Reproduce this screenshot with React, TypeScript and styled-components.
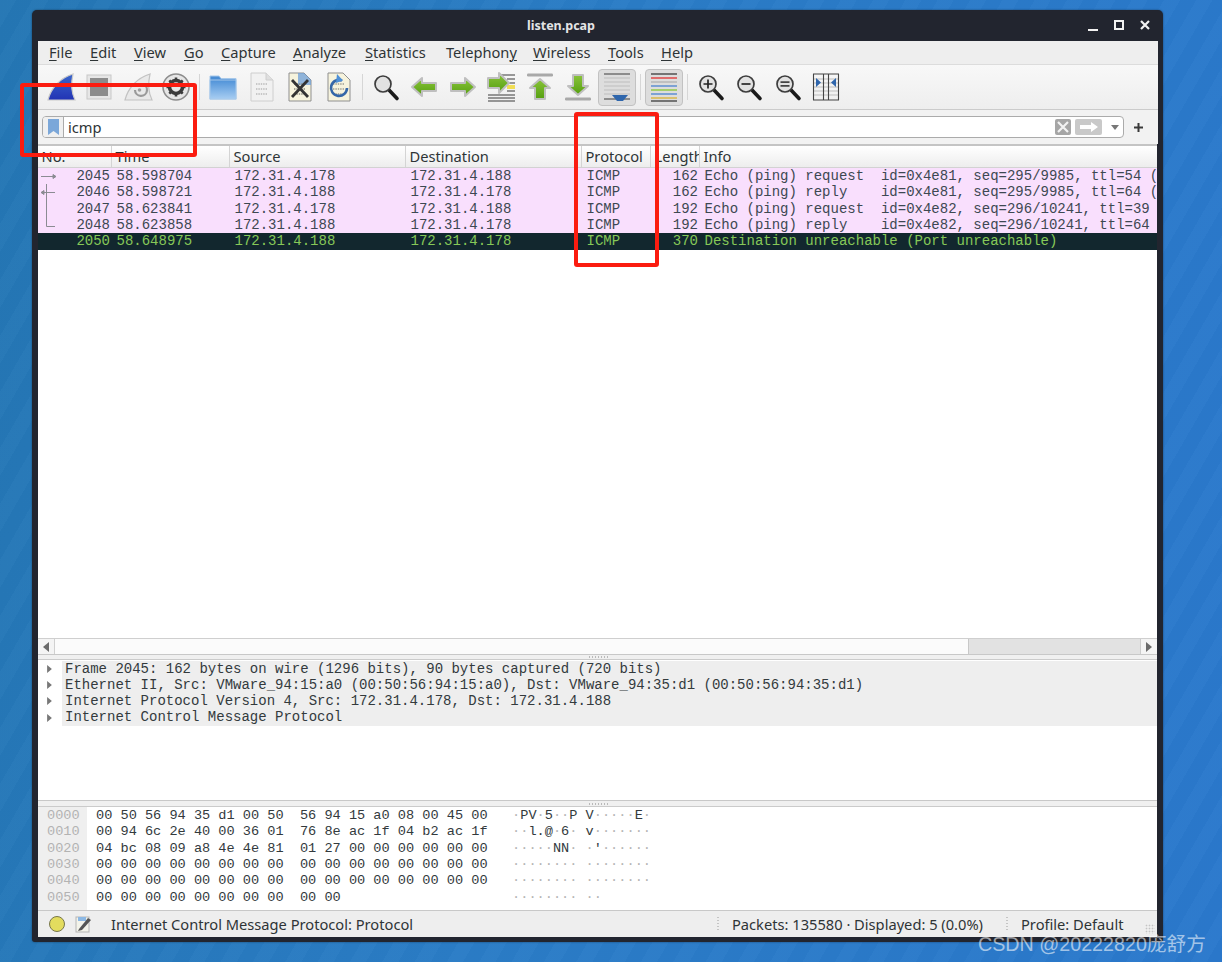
import React from "react";
import styled, { createGlobalStyle } from "styled-components";

const Global = createGlobalStyle`
  html, body { margin: 0; padding: 0; }
  body {
    width: 1222px; height: 962px; overflow: hidden;
    font-family: "Noto Sans", "Open Sans", sans-serif;
    background:
      repeating-linear-gradient(120deg, rgba(255,255,255,0.018) 0 14px, rgba(0,0,0,0.012) 14px 28px),
      linear-gradient(100deg, #2476b4 0%, #2a7cc6 45%, #2a78cc 100%);
  }
`;
const Desktop = styled.div`
  position: relative;
  width: 1222px;
  height: 962px;
  padding: 10px 0 0 32px;
  box-sizing: border-box;
`;
const Win = styled.div`
  width: 1131px;
  height: 932px;
  box-sizing: border-box;
  background: #22252f;
  border-radius: 5px 5px 3px 3px;
  padding: 0 5px 5px 6px;
  display: flex;
  flex-direction: column;
  box-shadow: 0 0 2px rgba(0,0,0,.5);
`;
const TitleBar = styled.div`
  height: 31px;
  flex: none;
  position: relative;
  display: flex;
  align-items: center;
  justify-content: center;
  padding-right: 74px;
  color: #e4e4e6;
  font: 700 12.5px "Noto Sans", sans-serif;
`;
const WinControls = styled.div`
  position: absolute;
  right: 6px;
  top: 8px;
  display: flex;
  gap: 12px;
  align-items: center;
`;
const Menu = styled.nav`
  height: 23px;
  flex: none;
  box-sizing: content-box;
  background: #eeeeee;
  border-bottom: 1px solid #dcdcdc;
  display: flex;
  align-items: center;
  padding-left: 11px;
  color: #2e3436;
  font-size: 14.67px;
  line-height: 21px;
`;
const MenuItem = styled.span<{ $w: number }>`
  width: ${(p) => p.$w}px;
  flex: none;
  margin-bottom: 1px;
  u { text-underline-offset: 2px; text-decoration-thickness: 1px; }
`;
const Toolbar = styled.div`
  height: 45px;
  flex: none;
  box-sizing: border-box;
  background: linear-gradient(#f8f8f8, #eeeeee);
  border-bottom: 1px solid #cbcbcb;
  display: flex;
  align-items: center;
  padding-left: 3.5px;
`;
const ToolBtn = styled.div<{ $on?: boolean }>`
  width: 38.5px;
  height: 37px;
  flex: none;
  box-sizing: border-box;
  display: flex;
  align-items: center;
  justify-content: center;
  border-radius: 4px;
  background: ${(p) => (p.$on ? "#dddddd" : "transparent")};
  border: 1px solid ${(p) => (p.$on ? "#c2c2c2" : "transparent")};
`;
const ToolSep = styled.div`
  width: 1px;
  height: 26px;
  flex: none;
  background: #d6d6d6;
  margin: 0 3.75px;
`;
const FilterBar = styled.div`
  height: 34px;
  flex: none;
  background: #f2f2f2;
  display: flex;
  align-items: center;
  padding-left: 4px;
  box-sizing: border-box;
`;
const FilterBox = styled.div`
  width: 1082px;
  height: 22px;
  box-sizing: border-box;
  border: 1px solid #ababab;
  border-radius: 4px;
  background: #fff;
  display: flex;
  align-items: center;
  flex: none;
`;
const Bookmark = styled.div`
  width: 21px;
  height: 100%;
  box-sizing: border-box;
  flex: none;
  background: #f0f0f0;
  border-right: 1px solid #ababab;
  border-radius: 3px 0 0 3px;
  display: flex;
  align-items: center;
  justify-content: center;
`;
const FilterText = styled.span`
  flex: 1;
  padding-left: 4px;
  font-size: 14.67px;
  color: #2e3436;
`;
const FilterEnd = styled.div`
  display: flex;
  align-items: center;
  margin-right: 4px;
  gap: 4px;
`;
const Plus = styled.div`
  margin-left: 9px;
  display: flex;
`;
const Panel = styled.div`
  flex: 1;
  min-height: 0;
  background: #fff;
  display: flex;
  flex-direction: column;
  margin-right: 1px;
  border-top: 2px solid #c4c4c4;
  overflow: hidden;
`;
const cols = "74px 118px 176px 176px 69px 49px 1fr";
const HeaderRow = styled.div`
  display: grid;
  grid-template-columns: ${cols};
  height: 22px;
  flex: none;
  box-sizing: border-box;
  background: linear-gradient(#ffffff, #ededed);
  border-bottom: 1px solid #d2d2d2;
`;
const HeadCell = styled.div`
  font-size: 14.67px;
  color: #2e3436;
  padding: 1px 0 0 3.5px;
  line-height: 19px;
  border-right: 1px solid #d4d4d4;
  overflow: hidden;
  white-space: nowrap;
  &:last-child { border-right: 0; }
`;
const PacketArea = styled.div`
  flex: 1;
  min-height: 0;
  background: #fff;
`;
const PacketRow = styled.div<{ $sel?: boolean }>`
  display: grid;
  grid-template-columns: ${cols};
  height: 16.33px;
  background: ${(p) => (p.$sel ? "#12272e" : "#f9dffd")};
  color: ${(p) => (p.$sel ? "#86c858" : "#3d4852")};
  font: 14px/16px "Liberation Mono", monospace;
  white-space: pre;
  overflow: hidden;
`;
const NoCell = styled.div`
  display: flex;
  justify-content: space-between;
  align-items: stretch;
  padding-right: 2px;
`;
const Cell = styled.div<{ $right?: boolean }>`
  padding: 0 2px 0 4.5px;
  overflow: hidden;
  text-align: ${(p) => (p.$right ? "right" : "left")};
`;
const HScroll = styled.div`
  height: 17px;
  flex: none;
  box-sizing: border-box;
  border-top: 1px solid #cfcfcf;
  border-bottom: 1px solid #c8c8c8;
  display: flex;
  background: #f2f2f2;
`;
const ScrollBtn = styled.div`
  width: 16px;
  flex: none;
  display: flex;
  align-items: center;
  justify-content: center;
  background: #f4f4f4;
`;
const ScrollThumb = styled.div`
  width: 913px;
  flex: none;
  background: #fbfbfb;
  border-left: 1px solid #d0d0d0;
  border-right: 1px solid #c8c8c8;
`;
const ScrollTrack = styled.div`
  flex: 1;
  background: #e2e2e2;
  border-right: 1px solid #cccccc;
`;
const Splitter = styled.div<{ $h: number }>`
  height: ${(p) => p.$h}px;
  flex: none;
  box-sizing: border-box;
  background: #f0f0f0;
  border-bottom: 1px solid #cbcbcb;
  display: flex;
  justify-content: center;
  align-items: center;
`;
const Grip = styled.div`
  width: 20px;
  height: 2px;
  background-image: radial-gradient(circle, #b9b9b9 40%, transparent 50%);
  background-size: 3px 2px;
`;
const Details = styled.div`
  height: 141px;
  flex: none;
  box-sizing: border-box;
  border-bottom: 1px solid #c8c8c8;
  background: #fff;
  font: 14px/16.33px "Liberation Mono", monospace;
  color: #333a3d;
  padding-top: 0.5px;
`;
const DetailRow = styled.div`
  display: flex;
  height: 16.33px;
  white-space: pre;
`;
const Expander = styled.div`
  width: 24px;
  flex: none;
  display: flex;
  align-items: center;
  justify-content: center;
  padding-right: 2px;
  box-sizing: border-box;
`;
const DetailText = styled.div`
  flex: 1;
  background: #eeeeee;
  padding-left: 3px;
`;
const Hex = styled.div`
  flex: none;
  height: 104px;
  display: flex;
  background: #fff;
  border-bottom: 1px solid #c8c8c8;
  box-sizing: border-box;
  font: 13.6px/16.33px "Liberation Mono", monospace;
  color: #333a3d;
  white-space: pre;
`;
const Gutter = styled.div`
  width: 49px;
  flex: none;
  background: #efefef;
  color: #b3b3b3;
  padding: 1px 0 0 9px;
  box-sizing: border-box;
`;
const HexBody = styled.div`
  padding: 1px 0 0 9px;
`;
const Dot = styled.span`
  color: #b5b5b5;
`;
const Status = styled.div`
  height: 26px;
  flex: none;
  position: relative;
  background: #eeeeee;
  display: flex;
  align-items: center;
  font-size: 14.67px;
  color: #2e3436;
  white-space: nowrap;
`;
const StatusLed = styled.div`
  width: 16px;
  height: 16px;
  border-radius: 50%;
  box-sizing: border-box;
  background: #e3dc5e;
  border: 1px solid #77764a;
  margin: 0 10px 0 11px;
  flex: none;
`;
const StatusMsg = styled.span`
  margin-left: 18px;
  width: 606px;
  flex: none;
`;
const StatusSep = styled.div<{ $gap: number }>`
  width: 2px;
  height: 16px;
  flex: none;
  margin-right: ${(p) => p.$gap}px;
  background-image: radial-gradient(circle, #c4c4c4 45%, transparent 55%);
  background-size: 2px 3px;
`;
const StatusCount = styled.span`
  width: 274px;
  flex: none;
`;
const ResizeGrip = styled.div`
  position: absolute;
  right: 2px;
  bottom: 3px;
  width: 10px;
  height: 10px;
  background-image: radial-gradient(circle, #c4c4c4 40%, transparent 50%);
  background-size: 3px 3px;
`;
const Highlight = styled.div<{ $l: number; $t: number; $w: number; $h: number }>`
  position: absolute;
  left: ${(p) => p.$l}px;
  top: ${(p) => p.$t}px;
  width: ${(p) => p.$w}px;
  height: ${(p) => p.$h}px;
  box-sizing: border-box;
  border: 4px solid #fb1c10;
  border-radius: 3px;
`;
const Watermark = styled.div`
  position: absolute;
  left: 978px;
  top: 931px;
  font: 19.7px/26px "Liberation Sans", "Noto Sans CJK SC", sans-serif;
  color: rgba(255, 255, 255, 0.58);
  white-space: nowrap;
`;

const Defs = () => (
  <svg width="0" height="0" style={{ position: "absolute" }}>
    <defs>
      <linearGradient id="g" x1="0" y1="0" x2="0" y2="1">
        <stop offset="0" stopColor="#8ac43a" />
        <stop offset="1" stopColor="#559f10" />
      </linearGradient>
      <linearGradient id="fin" x1="0" y1="0" x2="0" y2="1">
        <stop offset="0" stopColor="#3a66cc" />
        <stop offset="1" stopColor="#2233b4" />
      </linearGradient>
      <linearGradient id="folder" x1="0" y1="0" x2="0" y2="1">
        <stop offset="0" stopColor="#4f92d8" />
        <stop offset="1" stopColor="#a7cdf2" />
      </linearGradient>
    </defs>
  </svg>
);

const S: React.FC<{ children: React.ReactNode }> = ({ children }) => (
  <svg width="32" height="32" viewBox="0 0 32 32">{children}</svg>
);
const Arrow = ({ d }: { d: string }) => (
  <path d={d} fill="url(#g)" stroke="#bfbfbf" strokeWidth="2" strokeLinejoin="round" />
);
const FinIcon = () => (
  <S>
    <path d="M3 29C6 17 15 7 28 3C26 12 26 21 30 29Z" fill="url(#fin)" stroke="#c9c9c9" strokeWidth="1.2" />
  </S>
);
const StopIcon = () => (
  <S>
    <rect x="4" y="4" width="24" height="24" fill="#e6e6e6" stroke="#c8c8c8" />
    <rect x="7" y="7" width="18" height="18" fill="#8c8c8c" />
  </S>
);
const RestartIcon = () => (
  <S>
    <path d="M3 29C6 17 15 7 28 3C26 12 26 21 30 29Z" fill="#e9e9e9" stroke="#c2c2c2" strokeWidth="1.2" />
    <path d="M20 13A6 6 0 1 1 13 19" fill="none" stroke="#9a9a9a" strokeWidth="2.2" />
    <circle cx="17.5" cy="19" r="1.8" fill="#a0a0a0" />
  </S>
);
const GearIcon = () => (
  <S>
    <circle cx="16" cy="16" r="13" fill="#e6e6e6" stroke="#8d8d8d" strokeWidth="1.6" />
    <circle cx="16" cy="16" r="6.5" fill="none" stroke="#3b3b3b" strokeWidth="3.6" />
    <g stroke="#3b3b3b" strokeWidth="2.6">
      <path d="M16 6.5V10M16 22V25.5M6.5 16H10M22 16H25.5M9.3 9.3L11.8 11.8M20.2 20.2L22.7 22.7M9.3 22.7L11.8 20.2M20.2 11.8L22.7 9.3" />
    </g>
  </S>
);
const FolderIcon = () => (
  <S>
    <path d="M3 5H12L14 7.5H29V28H3Z" fill="#4a8dd4" stroke="#a6c8ea" />
    <rect x="3" y="9" width="26" height="19" fill="url(#folder)" stroke="#a6c8ea" />
  </S>
);
const Digits = ({ c = "#b9b9b9" }: { c?: string }) => (
  <g stroke={c} strokeWidth="1.6" strokeDasharray="1.4 1">
    <path d="M10 13H22M10 18H22M10 23H22" />
  </g>
);
const FileIcon = () => (
  <S>
    <path d="M5 2H20L27 9V30H5Z" fill="#f1f1f1" stroke="#cecece" />
    <path d="M20 2V9H27" fill="#dfdfdf" stroke="#cecece" />
    <Digits />
  </S>
);
const CloseFileIcon = () => (
  <S>
    <path d="M5 2H20L27 9V30H5Z" fill="#f6f3dd" stroke="#8f8f8f" />
    <path d="M14 2H20L27 9V14H14Z" fill="#6d9fd8" opacity=".75" />
    <Digits c="#8e8e82" />
    <path d="M8 9L24 26M24 9L8 26" stroke="#333" strokeWidth="2.8" />
  </S>
);
const ReloadFileIcon = () => (
  <S>
    <path d="M5 2H20L27 9V30H5Z" fill="#f6f3dd" stroke="#8f8f8f" />
    <Digits c="#9c9c90" />
    <path d="M19 9.5A8 8 0 1 0 24 17" fill="none" stroke="#3467a8" strokeWidth="2.6" />
    <path d="M14 3L20 9.5L13 12Z" fill="#4d8fd6" />
  </S>
);
const Magnifier = ({ children }: { children?: React.ReactNode }) => (
  <S>
    <path d="M19 19L27 27.5" stroke="#1b1b1b" strokeWidth="3.6" strokeLinecap="round" />
    <circle cx="13" cy="13" r="8" fill="#e2e2e2" stroke="#3d3d3d" strokeWidth="1.7" />
    {children}
  </S>
);
const BackIcon = () => (
  <S><Arrow d="M4 16L14 7V12H28V20H14V25Z" /></S>
);
const ForwardIcon = () => (
  <S><Arrow d="M28 16L18 7V12H4V20H18V25Z" /></S>
);
const JumpIcon = () => (
  <S>
    <g stroke="#3a3a3a" strokeWidth="1.2">
      <path d="M14 4H30M22 8H30M22 12H30M22 16H30M22 20H30M3 24H30M3 27H30M3 30H30" />
    </g>
    <path d="M22 14H30V18H22Z" fill="#f1de54" />
    <Arrow d="M24 12L14 2V7H3V17H14V22Z" />
  </S>
);
const TopIcon = () => (
  <S>
    <rect x="3" y="2.5" width="26" height="3" rx="1.2" fill="#a9a9a9" />
    <Arrow d="M16 8L26 17H21V28H11V17H6Z" />
  </S>
);
const BottomIcon = () => (
  <S>
    <rect x="3" y="26.5" width="26" height="3" rx="1.2" fill="#a9a9a9" />
    <Arrow d="M16 24L26 15H21V4H11V15H6Z" />
  </S>
);
const AutoIcon = () => (
  <S>
    <g stroke="#3c3c3c" strokeWidth="1.1">
      <path d="M3 3H29M3 28H29" />
    </g>
    <g stroke="#bdbdbd">
      <path d="M3 7H29M3 11H29M3 15H29M3 19H29M3 23H29" />
    </g>
    <path d="M11 24H27L22 30H16Z" fill="#2f66ac" />
  </S>
);
const ColorIcon = () => (
  <S>
    <g strokeWidth="1.3">
      <path d="M3 3H29" stroke="#3c3c3c" />
      <path d="M3 7H29" stroke="#e03030" />
      <path d="M3 11H29" stroke="#b0b0b0" />
      <path d="M3 15H29" stroke="#4a82d0" />
      <path d="M3 19H29" stroke="#86c832" />
      <path d="M3 23H29" stroke="#4a82d0" />
      <path d="M3 27H29" stroke="#d8b030" />
      <path d="M3 30H29" stroke="#3c3c3c" />
    </g>
  </S>
);
const ResizeIcon = () => (
  <S>
    <g stroke="#bdbdbd">
      <path d="M3 8H29M3 12H29M3 16H29M3 20H29M3 24H29" />
    </g>
    <g stroke="#444" strokeWidth="1.1">
      <path d="M3 3H29M3 29H29M3.5 3V29M13.5 3V29M18.5 3V29M28.5 3V29" />
    </g>
    <path d="M6 7L11 11.5L6 16Z M26 7L21 11.5L26 16Z" fill="#2f66ac" />
  </S>
);

const FilterClear = () => (
  <svg width="16" height="16" viewBox="0 0 16 16">
    <rect width="16" height="16" rx="2" fill="#a6a6a6" />
    <path d="M3 3L13 13M13 3L3 13" stroke="#f2f2f2" strokeWidth="2.2" />
  </svg>
);
const FilterApply = () => (
  <svg width="27" height="16" viewBox="0 0 27 16">
    <rect width="27" height="16" rx="2" fill="#c9c9c9" />
    <path d="M5 6H16V3L23 8L16 13V10H5Z" fill="#fff" />
  </svg>
);
const Caret = () => (
  <svg width="8" height="5" viewBox="0 0 8 5" style={{ marginLeft: 5 }}>
    <path d="M0 0H8L4 5Z" fill="#777" />
  </svg>
);

const Tri = ({ left, small }: { left?: boolean; small?: boolean }) => (
  <svg width={small ? 5 : 6} height={small ? 8 : 10} viewBox="0 0 6 10">
    <path d={left ? "M6 0V10L0 5Z" : "M0 0V10L6 5Z"} fill={small ? "#777" : "#6a6a6a"} />
  </svg>
);

const Rel = ({ kind }: { kind: "a" | "b" | "c" | "d" }) => (
  <svg width="22" height="17" viewBox="0 0 22 17">
    <g fill="none" stroke="#8b8b93" strokeWidth="1">
      {kind === "a" && <><path d="M3 8.5H17" /><path d="M15 6.5L18 8.5L15 10.5Z" fill="#8b8b93" /></>}
      {kind === "b" && <><path d="M8.5 0V17M3 8.5H17" /><path d="M6 6.5L3 8.5L6 10.5Z" fill="#8b8b93" /></>}
      {kind === "c" && <path d="M8.5 0V17" />}
      {kind === "d" && <path d="M8.5 0V9.5H17" />}
    </g>
  </svg>
);

const menus: [string, string, string, number][] = [
  ["", "F", "ile", 41],
  ["", "E", "dit", 44],
  ["", "V", "iew", 50],
  ["", "G", "o", 37],
  ["", "C", "apture", 72],
  ["", "A", "nalyze", 72],
  ["", "S", "tatistics", 81],
  ["Telephon", "y", "", 87],
  ["", "W", "ireless", 75],
  ["", "T", "ools", 53],
  ["", "H", "elp", 50],
];

const packets = [
  { rel: "a", no: "2045", t: "58.598704", s: "172.31.4.178", d: "172.31.4.188", len: "162", info: "Echo (ping) request  id=0x4e81, seq=295/9985, ttl=54 (reply in 2046)" },
  { rel: "b", no: "2046", t: "58.598721", s: "172.31.4.188", d: "172.31.4.178", len: "162", info: "Echo (ping) reply    id=0x4e81, seq=295/9985, ttl=64 (request in 2045)" },
  { rel: "c", no: "2047", t: "58.623841", s: "172.31.4.178", d: "172.31.4.188", len: "192", info: "Echo (ping) request  id=0x4e82, seq=296/10241, ttl=39 (reply in 2048)" },
  { rel: "d", no: "2048", t: "58.623858", s: "172.31.4.188", d: "172.31.4.178", len: "192", info: "Echo (ping) reply    id=0x4e82, seq=296/10241, ttl=64 (request in 2047)" },
  { rel: "", no: "2050", t: "58.648975", s: "172.31.4.188", d: "172.31.4.178", len: "370", info: "Destination unreachable (Port unreachable)", sel: true },
];

const details = [
  "Frame 2045: 162 bytes on wire (1296 bits), 90 bytes captured (720 bits)",
  "Ethernet II, Src: VMware_94:15:a0 (00:50:56:94:15:a0), Dst: VMware_94:35:d1 (00:50:56:94:35:d1)",
  "Internet Protocol Version 4, Src: 172.31.4.178, Dst: 172.31.4.188",
  "Internet Control Message Protocol",
];

const hex: [string, string, string][] = [
  ["0000", "00 50 56 94 35 d1 00 50  56 94 15 a0 08 00 45 00", "·PV·5··P V·····E·"],
  ["0010", "00 94 6c 2e 40 00 36 01  76 8e ac 1f 04 b2 ac 1f", "··l.@·6· v·······"],
  ["0020", "04 bc 08 09 a8 4e 4e 81  01 27 00 00 00 00 00 00", "·····NN· ·'······"],
  ["0030", "00 00 00 00 00 00 00 00  00 00 00 00 00 00 00 00", "········ ········"],
  ["0040", "00 00 00 00 00 00 00 00  00 00 00 00 00 00 00 00", "········ ········"],
  ["0050", "00 00 00 00 00 00 00 00  00 00", "········ ··"],
];

const pad = (s: string) => s.padEnd(51, " ");

export default function App() {
  return (
    <Desktop>
      <Global />
      <Defs />
      <Win>
        <TitleBar>
          listen.pcap
          <WinControls>
            <svg width="14" height="14" viewBox="0 0 14 14"><rect x="2" y="11" width="10" height="2" fill="#f2f2f2" /></svg>
            <svg width="14" height="14" viewBox="0 0 14 14"><rect x="3" y="3" width="8" height="8" fill="none" stroke="#f2f2f2" strokeWidth="2" /></svg>
            <svg width="14" height="14" viewBox="0 0 14 14"><path d="M3 3L11 11M11 3L3 11" stroke="#f2f2f2" strokeWidth="2.2" /></svg>
          </WinControls>
        </TitleBar>
        <Menu>
          {menus.map(([pre, u, post, w]) => (
            <MenuItem key={u + post} $w={w}>
              {pre}<u>{u}</u>{post}
            </MenuItem>
          ))}
        </Menu>
        <Toolbar>
          <ToolBtn><FinIcon /></ToolBtn>
          <ToolBtn><StopIcon /></ToolBtn>
          <ToolBtn><RestartIcon /></ToolBtn>
          <ToolBtn><GearIcon /></ToolBtn>
          <ToolSep />
          <ToolBtn><FolderIcon /></ToolBtn>
          <ToolBtn><FileIcon /></ToolBtn>
          <ToolBtn><CloseFileIcon /></ToolBtn>
          <ToolBtn><ReloadFileIcon /></ToolBtn>
          <ToolSep />
          <ToolBtn><Magnifier /></ToolBtn>
          <ToolBtn><BackIcon /></ToolBtn>
          <ToolBtn><ForwardIcon /></ToolBtn>
          <ToolBtn><JumpIcon /></ToolBtn>
          <ToolBtn><TopIcon /></ToolBtn>
          <ToolBtn><BottomIcon /></ToolBtn>
          <ToolBtn $on><AutoIcon /></ToolBtn>
          <ToolSep />
          <ToolBtn $on><ColorIcon /></ToolBtn>
          <ToolSep />
          <ToolBtn>
            <Magnifier><path d="M8.5 13H17.5M13 8.5V17.5" stroke="#222" strokeWidth="1.7" /></Magnifier>
          </ToolBtn>
          <ToolBtn>
            <Magnifier><path d="M8.5 13H17.5" stroke="#444" strokeWidth="2" /></Magnifier>
          </ToolBtn>
          <ToolBtn>
            <Magnifier><path d="M8.5 11.2H17.5M8.5 14.8H17.5" stroke="#444" strokeWidth="1.7" /></Magnifier>
          </ToolBtn>
          <ToolBtn><ResizeIcon /></ToolBtn>
        </Toolbar>
        <FilterBar>
          <FilterBox>
            <Bookmark>
              <svg width="11" height="16" viewBox="0 0 11 16"><path d="M0 0H11V16L5.5 12L0 16Z" fill="#7ba7d9" /></svg>
            </Bookmark>
            <FilterText>icmp</FilterText>
            <FilterEnd>
              <FilterClear />
              <FilterApply />
              <Caret />
            </FilterEnd>
          </FilterBox>
          <Plus>
            <svg width="11" height="11" viewBox="0 0 11 11"><path d="M5.5 1V10M1 5.5H10" stroke="#3a3a3a" strokeWidth="2" /></svg>
          </Plus>
        </FilterBar>
        <Panel>
          <HeaderRow>
            <HeadCell>No.</HeadCell>
            <HeadCell>Time</HeadCell>
            <HeadCell>Source</HeadCell>
            <HeadCell>Destination</HeadCell>
            <HeadCell>Protocol</HeadCell>
            <HeadCell>Length</HeadCell>
            <HeadCell>Info</HeadCell>
          </HeaderRow>
          <PacketArea>
            {packets.map((p) => (
              <PacketRow key={p.no} $sel={p.sel}>
                <NoCell>
                  {p.rel ? <Rel kind={p.rel as "a"} /> : <span />}
                  <span>{p.no}</span>
                </NoCell>
                <Cell>{p.t}</Cell>
                <Cell>{p.s}</Cell>
                <Cell>{p.d}</Cell>
                <Cell>ICMP</Cell>
                <Cell $right>{p.len}</Cell>
                <Cell>{p.info}</Cell>
              </PacketRow>
            ))}
          </PacketArea>
          <HScroll>
            <ScrollBtn><Tri left /></ScrollBtn>
            <ScrollThumb />
            <ScrollTrack />
            <ScrollBtn><Tri /></ScrollBtn>
          </HScroll>
          <Splitter $h={5}><Grip /></Splitter>
          <Details>
            {details.map((d) => (
              <DetailRow key={d}>
                <Expander><Tri small /></Expander>
                <DetailText>{d}</DetailText>
              </DetailRow>
            ))}
          </Details>
          <Splitter $h={6}><Grip /></Splitter>
          <Hex>
            <Gutter>
              {hex.map(([o]) => <div key={o}>{o}</div>)}
            </Gutter>
            <HexBody>
              {hex.map(([o, h, a]) => (
                <div key={o}>
                  {pad(h)}
                  {a.split("").map((c, i) => (c === "·" ? <Dot key={i}>·</Dot> : <span key={i}>{c}</span>))}
                </div>
              ))}
            </HexBody>
          </Hex>
          <Status>
            <StatusLed />
            <svg width="18" height="18" viewBox="0 0 18 18">
              <rect x="1" y="2" width="13" height="15" fill="#f3f3ea" stroke="#b5b5b5" />
              <path d="M3 2H11V6H3Z" fill="#8cb8e4" />
              <path d="M4 14L13 3L16 5L7 15L3 16Z" fill="#555" />
            </svg>
            <StatusMsg>Internet Control Message Protocol: Protocol</StatusMsg>
            <StatusSep $gap={13} />
            <StatusCount>Packets: 135580 · Displayed: 5 (0.0%)</StatusCount>
            <StatusSep $gap={13} />
            <span>Profile: Default</span>
            <ResizeGrip />
          </Status>
        </Panel>
      </Win>
      <Highlight $l={20} $t={83} $w={177} $h={74} />
      <Highlight $l={574} $t={112} $w={85} $h={155} />
      <Watermark>CSDN @20222820庞舒方</Watermark>
    </Desktop>
  );
}
